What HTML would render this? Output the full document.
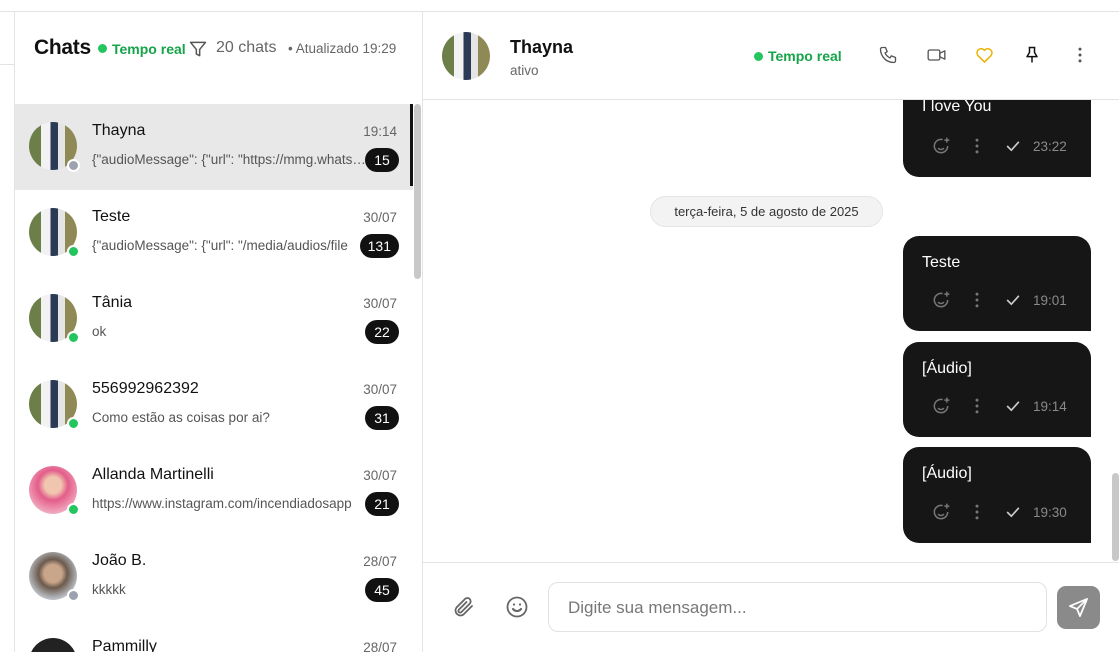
<!DOCTYPE html>
<html><head><meta charset="utf-8"><style>
*{box-sizing:border-box;margin:0;padding:0}
body{width:1119px;height:671px;overflow:hidden;background:#fff;font-family:"Liberation Sans",sans-serif;position:relative;color:#111}
.abs{position:absolute}
.av{position:absolute;width:48px;height:48px;border-radius:50%;overflow:hidden;background:radial-gradient(circle at 40% 40%,#e8e2d0 0 18%,#7a8a5a 35%,#c9b27a 60%,#5b6b3a 100%)}
.av.couple{background:linear-gradient(90deg,#6d7f48 0 25%,#f2f2f2 25% 45%,#2b3a55 45% 60%,#e5e5e5 60% 75%,#8f8a55 75%)}
.dot{position:absolute;width:13px;height:13px;border-radius:50%;border:2px solid #fff}
.item{position:absolute;left:15px;width:398px;height:86px}
.name{position:absolute;left:77px;top:18px;font-size:16px;color:#111}
.time{position:absolute;right:16px;top:20px;font-size:13.5px;color:#666}
.prev{position:absolute;left:77px;top:48px;font-size:13.5px;color:#555;white-space:nowrap;overflow:hidden;width:280px;text-overflow:ellipsis}
.badge{position:absolute;right:14px;top:44px;height:24px;min-width:34px;padding:0 8px;border-radius:12px;background:#111;color:#fff;font-size:14px;line-height:24px;text-align:center}
.bub{position:absolute;left:903px;width:188px;background:#161616;border-radius:16px 16px 0 16px;color:#fff}
.bub .t{position:absolute;left:19px;top:18px;font-size:16px}
.bub .m{position:absolute;left:28px;bottom:21px;display:flex;align-items:center;gap:0}
.tm{font-size:13.5px;color:#8a8a8a;margin-left:10px}
</style></head><body>
<div class="abs" style="left:0;top:11px;width:1119px;height:1px;background:#e3e3e3"></div>
<div class="abs" style="left:0;top:64px;width:14px;height:1px;background:#e3e3e3"></div>
<div class="abs" style="left:14px;top:11px;width:1px;height:641px;background:#e3e3e3"></div>
<div class="abs" style="left:422px;top:11px;width:1px;height:641px;background:#e3e3e3"></div>

<div class="abs" style="left:34px;top:36px;font-size:21px;font-weight:bold;color:#111;letter-spacing:-0.3px">Chats</div>
<div class="abs" style="left:98px;top:44px;width:9px;height:9px;border-radius:50%;background:#22c55e"></div>
<div class="abs" style="left:112px;top:41px;font-size:14px;font-weight:bold;color:#16a34a">Tempo real</div>
<svg class="abs" style="left:188px;top:39px" width="20" height="20" viewBox="0 0 24 24" fill="none" stroke="#555" stroke-width="1.8" stroke-linejoin="round"><path d="M3 4h18l-7 8.5V20l-4-2v-5.5z"/></svg>
<div class="abs" style="left:216px;top:39px;font-size:16px;color:#666">20 chats</div>
<div class="abs" style="left:288px;top:41px;font-size:13.5px;color:#666">• Atualizado 19:29</div>

<div class="item" style="top:104px;background:#e8e8e8">
 <div class="av couple" style="left:14px;top:18px"></div><div class="dot" style="left:52px;top:55px;background:#9ca3af"></div>
 <div class="name">Thayna</div><div class="time">19:14</div>
 <div class="prev">{"audioMessage": {"url": "https://mmg.whatsapp.net</div>
 <div class="badge" style="right:14px">15</div>
</div>
<div class="abs" style="left:410px;top:104px;width:3px;height:82px;background:#111"></div>
<div class="abs" style="left:414px;top:104px;width:7px;height:175px;border-radius:4px;background:#c8c8c8"></div>

<div class="item" style="top:190px">
 <div class="av couple" style="left:14px;top:18px"></div><div class="dot" style="left:52px;top:55px;background:#22c55e"></div>
 <div class="name">Teste</div><div class="time">30/07</div>
 <div class="prev">{"audioMessage": {"url": "/media/audios/file</div>
 <div class="badge" style="right:14px">131</div>
</div>
<div class="item" style="top:276px">
 <div class="av couple" style="left:14px;top:18px"></div><div class="dot" style="left:52px;top:55px;background:#22c55e"></div>
 <div class="name">Tânia</div><div class="time">30/07</div>
 <div class="prev">ok</div><div class="badge">22</div>
</div>
<div class="item" style="top:362px">
 <div class="av couple" style="left:14px;top:18px"></div><div class="dot" style="left:52px;top:55px;background:#22c55e"></div>
 <div class="name">556992962392</div><div class="time">30/07</div>
 <div class="prev">Como estão as coisas por ai?</div><div class="badge">31</div>
</div>
<div class="item" style="top:448px">
 <div class="av" style="left:14px;top:18px;background:radial-gradient(circle at 50% 40%,#f1c6b0 0 22%,#e35d8a 40%,#f0a0b8 70%,#ddd 100%)"></div><div class="dot" style="left:52px;top:55px;background:#22c55e"></div>
 <div class="name">Allanda Martinelli</div><div class="time">30/07</div>
 <div class="prev">https://www.instagram.com/incendiadosapp</div><div class="badge">21</div>
</div>
<div class="item" style="top:534px">
 <div class="av" style="left:14px;top:18px;background:radial-gradient(circle at 50% 45%,#c9a58a 0 25%,#6b5a4d 40%,#b8bcc2 70%,#d6d8da 100%)"></div><div class="dot" style="left:52px;top:55px;background:#9ca3af"></div>
 <div class="name">João B.</div><div class="time">28/07</div>
 <div class="prev">kkkkk</div><div class="badge">45</div>
</div>
<div class="abs" style="left:15px;top:620px;width:398px;height:32px;overflow:hidden">
 <div class="av" style="left:14px;top:18px;background:#222"></div>
 <div class="name" style="top:18px">Pammilly</div><div class="time" style="right:16px;top:20px">28/07</div>
</div>

<div class="abs" style="left:423px;top:99px;width:696px;height:1px;background:#e3e3e3"></div>
<div class="av couple" style="left:442px;top:32px"></div>
<div class="abs" style="left:510px;top:37px;font-size:18px;font-weight:bold;color:#111">Thayna</div>
<div class="abs" style="left:510px;top:63px;font-size:13.5px;color:#666">ativo</div>
<div class="abs" style="left:754px;top:52px;width:9px;height:9px;border-radius:50%;background:#22c55e"></div>
<div class="abs" style="left:768px;top:48px;font-size:14px;font-weight:bold;color:#16a34a">Tempo real</div>
<svg class="abs" style="left:878px;top:45px" width="20" height="20" viewBox="0 0 24 24" fill="none" stroke="#555" stroke-width="1.6" stroke-linejoin="round"><path d="M5 3h4l2 5-2.5 1.5a11 11 0 0 0 6 6L16 13l5 2v4a2 2 0 0 1-2 2A16 16 0 0 1 3 5a2 2 0 0 1 2-2z"/></svg>
<svg class="abs" style="left:926px;top:45px" width="21" height="20" viewBox="0 0 24 24" fill="none" stroke="#555" stroke-width="1.6" stroke-linejoin="round"><rect x="2" y="6" width="14" height="12" rx="2"/><path d="M16 10l6-3v10l-6-3z"/></svg>
<svg class="abs" style="left:974px;top:45px" width="21" height="20" viewBox="0 0 24 24" fill="none" stroke="#eab308" stroke-width="1.8" stroke-linejoin="round"><path d="M12 20.5l-8-8a5 5 0 0 1 8-6 5 5 0 0 1 8 6z"/></svg>
<svg class="abs" style="left:1022px;top:45px" width="20" height="20" viewBox="0 0 24 24" fill="none" stroke="#111" stroke-width="1.8" stroke-linejoin="round"><path d="M8 3h8M9 3v6l-3 5h12l-3-5V3M12 14v7"/></svg>
<svg class="abs" style="left:1070px;top:45px" width="20" height="20" viewBox="0 0 24 24" fill="#555"><circle cx="12" cy="5" r="1.8"/><circle cx="12" cy="12" r="1.8"/><circle cx="12" cy="19" r="1.8"/></svg>

<div class="abs" style="left:423px;top:100px;width:696px;height:462px;overflow:hidden">
 <div class="abs" style="left:689px;top:373px;width:7px;height:88px;border-radius:4px;background:#c8c8c8"></div>
</div>
<div class="bub" style="top:80px;height:97px;clip-path:inset(20px 0 0 0)"><div class="t" style="top:18px">I love You</div>
 <div class="m"><svg width="20" height="20" viewBox="0 0 24 24" fill="none" stroke="#777" stroke-width="1.8"><path d="M20 12a8 8 0 1 1-6-7.7"/><path d="M8.5 14.5a4.5 4.5 0 0 0 7 0M9 10h.01M15 10h.01M19 2v6M16 5h6"/></svg><svg style="margin-left:16px" width="20" height="20" viewBox="0 0 24 24" fill="#777"><circle cx="12" cy="5" r="1.8"/><circle cx="12" cy="12" r="1.8"/><circle cx="12" cy="19" r="1.8"/></svg><svg style="margin-left:16px" width="20" height="20" viewBox="0 0 24 24" fill="none" stroke="#ccc" stroke-width="2"><path d="M5 12l5 5 9-10"/></svg><span class="tm">23:22</span></div></div>

<div class="abs" style="left:650px;top:196px;width:233px;height:31px;border-radius:16px;background:#f3f3f3;border:1px solid #e5e5e5;font-size:13px;color:#333;text-align:center;line-height:29px">terça-feira, 5 de agosto de 2025</div>

<div class="bub" style="top:236px;height:95px"><div class="t">Teste</div>
 <div class="m"><svg width="20" height="20" viewBox="0 0 24 24" fill="none" stroke="#777" stroke-width="1.8"><path d="M20 12a8 8 0 1 1-6-7.7"/><path d="M8.5 14.5a4.5 4.5 0 0 0 7 0M9 10h.01M15 10h.01M19 2v6M16 5h6"/></svg><svg style="margin-left:16px" width="20" height="20" viewBox="0 0 24 24" fill="#777"><circle cx="12" cy="5" r="1.8"/><circle cx="12" cy="12" r="1.8"/><circle cx="12" cy="19" r="1.8"/></svg><svg style="margin-left:16px" width="20" height="20" viewBox="0 0 24 24" fill="none" stroke="#ccc" stroke-width="2"><path d="M5 12l5 5 9-10"/></svg><span class="tm">19:01</span></div></div>
<div class="bub" style="top:342px;height:95px"><div class="t">[Áudio]</div>
 <div class="m"><svg width="20" height="20" viewBox="0 0 24 24" fill="none" stroke="#777" stroke-width="1.8"><path d="M20 12a8 8 0 1 1-6-7.7"/><path d="M8.5 14.5a4.5 4.5 0 0 0 7 0M9 10h.01M15 10h.01M19 2v6M16 5h6"/></svg><svg style="margin-left:16px" width="20" height="20" viewBox="0 0 24 24" fill="#777"><circle cx="12" cy="5" r="1.8"/><circle cx="12" cy="12" r="1.8"/><circle cx="12" cy="19" r="1.8"/></svg><svg style="margin-left:16px" width="20" height="20" viewBox="0 0 24 24" fill="none" stroke="#ccc" stroke-width="2"><path d="M5 12l5 5 9-10"/></svg><span class="tm">19:14</span></div></div>
<div class="bub" style="top:447px;height:96px"><div class="t">[Áudio]</div>
 <div class="m"><svg width="20" height="20" viewBox="0 0 24 24" fill="none" stroke="#777" stroke-width="1.8"><path d="M20 12a8 8 0 1 1-6-7.7"/><path d="M8.5 14.5a4.5 4.5 0 0 0 7 0M9 10h.01M15 10h.01M19 2v6M16 5h6"/></svg><svg style="margin-left:16px" width="20" height="20" viewBox="0 0 24 24" fill="#777"><circle cx="12" cy="5" r="1.8"/><circle cx="12" cy="12" r="1.8"/><circle cx="12" cy="19" r="1.8"/></svg><svg style="margin-left:16px" width="20" height="20" viewBox="0 0 24 24" fill="none" stroke="#ccc" stroke-width="2"><path d="M5 12l5 5 9-10"/></svg><span class="tm">19:30</span></div></div>

<div class="abs" style="left:423px;top:562px;width:696px;height:1px;background:#e3e3e3"></div>
<svg class="abs" style="left:452px;top:595px" width="24" height="24" viewBox="0 0 24 24" fill="none" stroke="#666" stroke-width="1.8" stroke-linecap="round"><path d="M20 11l-8.5 8.5a5 5 0 0 1-7-7L13 4a3.3 3.3 0 0 1 4.7 4.7L9.2 17.2a1.7 1.7 0 0 1-2.4-2.4L14.5 7"/></svg>
<svg class="abs" style="left:505px;top:595px" width="24" height="24" viewBox="0 0 24 24" fill="none" stroke="#666" stroke-width="1.8"><circle cx="12" cy="12" r="9.5"/><path d="M8 14a5 5 0 0 0 8 0M9 9.5h.01M15 9.5h.01" stroke-linecap="round" stroke-width="2.2"/></svg>
<div class="abs" style="left:548px;top:582px;width:499px;height:50px;border:1px solid #e2e2e2;border-radius:10px;font-size:17px;color:#777;padding:15px 0 0 19px">Digite sua mensagem...</div>
<div class="abs" style="left:1057px;top:586px;width:43px;height:43px;border-radius:9px;background:#8a8a8a"></div>
<svg class="abs" style="left:1067px;top:596px" width="23" height="23" viewBox="0 0 24 24" fill="none" stroke="#fff" stroke-width="1.8" stroke-linejoin="round"><path d="M21 3L3 10.5l7.5 3 3 7.5zM21 3L10.5 13.5"/></svg>
</body></html>
